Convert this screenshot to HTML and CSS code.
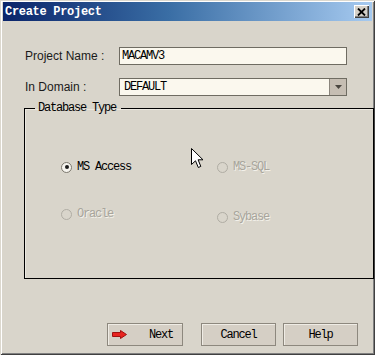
FILE: index.html
```html
<!DOCTYPE html>
<html>
<head>
<meta charset="utf-8">
<title>Create Project</title>
<link rel="stylesheet" href="styles.css">
</head>
<body>
<div class="window">
  <div class="titlebar">
    <span class="title">Create Project</span>
    <span class="close">
      <svg width="9" height="8" viewBox="0 0 9 8"><path d="M1 0.5 L8 7.5 M8 0.5 L1 7.5" stroke="#000" stroke-width="1.8" fill="none"/></svg>
    </span>
  </div>
  <div class="content">
    <div class="form">
      <span class="label">Project Name :</span>
      <div class="input">MACAMV3</div>
      <span class="label">In Domain :</span>
      <div class="combo">
        <span class="combo-text">DEFAULT</span>
        <span class="combo-btn"><svg width="7" height="4" viewBox="0 0 7 4"><path d="M0 0 H7 L3.5 4 Z" fill="#4a463f"/></svg></span>
      </div>
    </div>
    <fieldset class="group">
      <legend class="legend">Database Type</legend>
      <div class="radios">
        <div class="radio"><span class="circle checked"></span><span class="rtext">MS Access</span></div>
        <div class="radio disabled"><span class="circle"></span><span class="rtext">MS-SQL</span></div>
        <div class="radio disabled"><span class="circle"></span><span class="rtext">Oracle</span></div>
        <div class="radio disabled low"><span class="circle"></span><span class="rtext">Sybase</span></div>
      </div>
    </fieldset>
    <div class="buttons">
      <button class="btn btn-next">
        <svg class="arrow" width="15" height="9" viewBox="0 0 15 9"><path d="M0.5 2.5 H8.5 V0.5 L14.5 4.5 L8.5 8.5 V6.5 H0.5 Z" fill="#e8231f" stroke="#a01010" stroke-width="1"/></svg>
        <span class="btn-label">Next</span>
      </button>
      <button class="btn btn-cancel">Cancel</button>
      <button class="btn btn-help">Help</button>
    </div>
  </div>
  <svg class="cursor" width="13" height="21" viewBox="0 0 13 21"><path d="M0.5 0.5 L0.5 16.5 L4.5 12.8 L7.3 19.5 L9.8 18.4 L7.1 11.8 L12 11.8 Z" fill="#fff" stroke="#000" stroke-width="1" stroke-linejoin="miter"/></svg>
</div>
</body>
</html>
```

FILE: styles.css
```css
html, body {
  margin: 0;
  padding: 0;
}
body {
  width: 375px;
  height: 355px;
  overflow: hidden;
  background: #d9d5cb;
}
.window {
  position: relative;
  box-sizing: border-box;
  width: 375px;
  height: 355px;
  padding: 2px 3px 3px 3px;
  background: #d9d5cb;
  box-shadow: inset 1px 1px #dcd8ce, inset -1px -1px #404040, inset 2px 2px #ffffff, inset -2px -2px #808080;
  display: flex;
  flex-direction: column;
  font-family: "Liberation Mono", "DejaVu Sans Mono", monospace;
  font-size: 12px;
  color: #000;
}
.titlebar {
  height: 19px;
  flex: none;
  display: flex;
  align-items: center;
  background: linear-gradient(to right, #0a246a 0%, #3a6ea5 45%, #a6caf0 100%);
  padding-left: 2px;
}
.title {
  color: #fff;
  font-weight: bold;
  font-size: 12px;
  letter-spacing: -0.3px;
}
.close {
  margin-left: auto;
  margin-right: 3px;
  width: 15px;
  height: 13px;
  box-sizing: border-box;
  background: #d4d0c8;
  box-shadow: inset 1px 1px #fff, inset -1px -1px #404040, inset -2px -2px #808080;
  display: flex;
  align-items: center;
  justify-content: center;
}
.content {
  flex: 1;
  display: flex;
  flex-direction: column;
  padding: 26px 0 6px 0;
}
.form {
  display: grid;
  grid-template-columns: 94px 228px;
  row-gap: 13px;
  padding-left: 22px;
  align-items: center;
}
.label {
  font-family: "Liberation Sans", Arial, sans-serif;
  font-size: 12px;
  color: #1a1a1a;
}
.input, .combo {
  box-sizing: border-box;
  height: 18px;
  border: 1px solid #6f6c62;
  background: #fbf8ee;
  letter-spacing: -1.2px;
  display: flex;
  align-items: center;
}
.input {
  padding-left: 2px;
}
.combo-text {
  padding-left: 4px;
  flex: 1;
}
.combo-btn {
  width: 16px;
  height: 16px;
  border-left: 1px solid #8a857c;
  background: #c6beb3;
  display: flex;
  align-items: center;
  justify-content: center;
}
.group {
  box-sizing: border-box;
  margin: 5px 0 0 21px;
  width: 325px;
  height: 178px;
  padding: 0;
  border: 1px solid #000;
  box-shadow: inset 1px 1px #ebe8e0;
}
.legend {
  margin-left: 10px;
  padding: 0 5px 0 3px;
  letter-spacing: -1.2px;
}
.radios {
  display: grid;
  grid-template-columns: 156px 156px;
  row-gap: 33px;
  padding: 45px 0 0 36px;
}
.radio {
  display: flex;
  align-items: center;
  gap: 5px;
  height: 14px;
  letter-spacing: -1.2px;
}
.radio.low {
  margin-top: 3px;
}
.circle {
  box-sizing: border-box;
  width: 11px;
  height: 11px;
  border-radius: 50%;
  border: 1px solid #7c786e;
  background: #f6f4ee;
  display: flex;
  align-items: center;
  justify-content: center;
}
.circle.checked::after {
  content: "";
  width: 4px;
  height: 4px;
  border-radius: 50%;
  background: #1a1a1a;
}
.radio.disabled {
  color: #a8a59c;
  text-shadow: 1px 1px #f3f1ea;
}
.radio.disabled .circle {
  border-color: #b0ada4;
  background: transparent;
}
.buttons {
  margin-top: auto;
  display: flex;
  padding-left: 104px;
}
.btn {
  box-sizing: border-box;
  height: 23px;
  border: 1px solid #8d887e;
  background: #d5cfc5;
  box-shadow: inset 1px 1px #efece5;
  font-family: "Liberation Mono", "DejaVu Sans Mono", monospace;
  font-size: 12px;
  letter-spacing: -1.2px;
  color: #000;
  padding: 0;
  display: flex;
  align-items: center;
  justify-content: center;
}
.btn-next {
  width: 76px;
  justify-content: flex-start;
  padding-left: 4px;
}
.arrow {
  flex: none;
}
.btn-label {
  margin-left: 22px;
}
.btn-cancel {
  width: 75px;
  margin-left: 18px;
}
.btn-help {
  width: 75px;
  margin-left: 7px;
}
.cursor {
  position: absolute;
  left: 191px;
  top: 148px;
}
```
